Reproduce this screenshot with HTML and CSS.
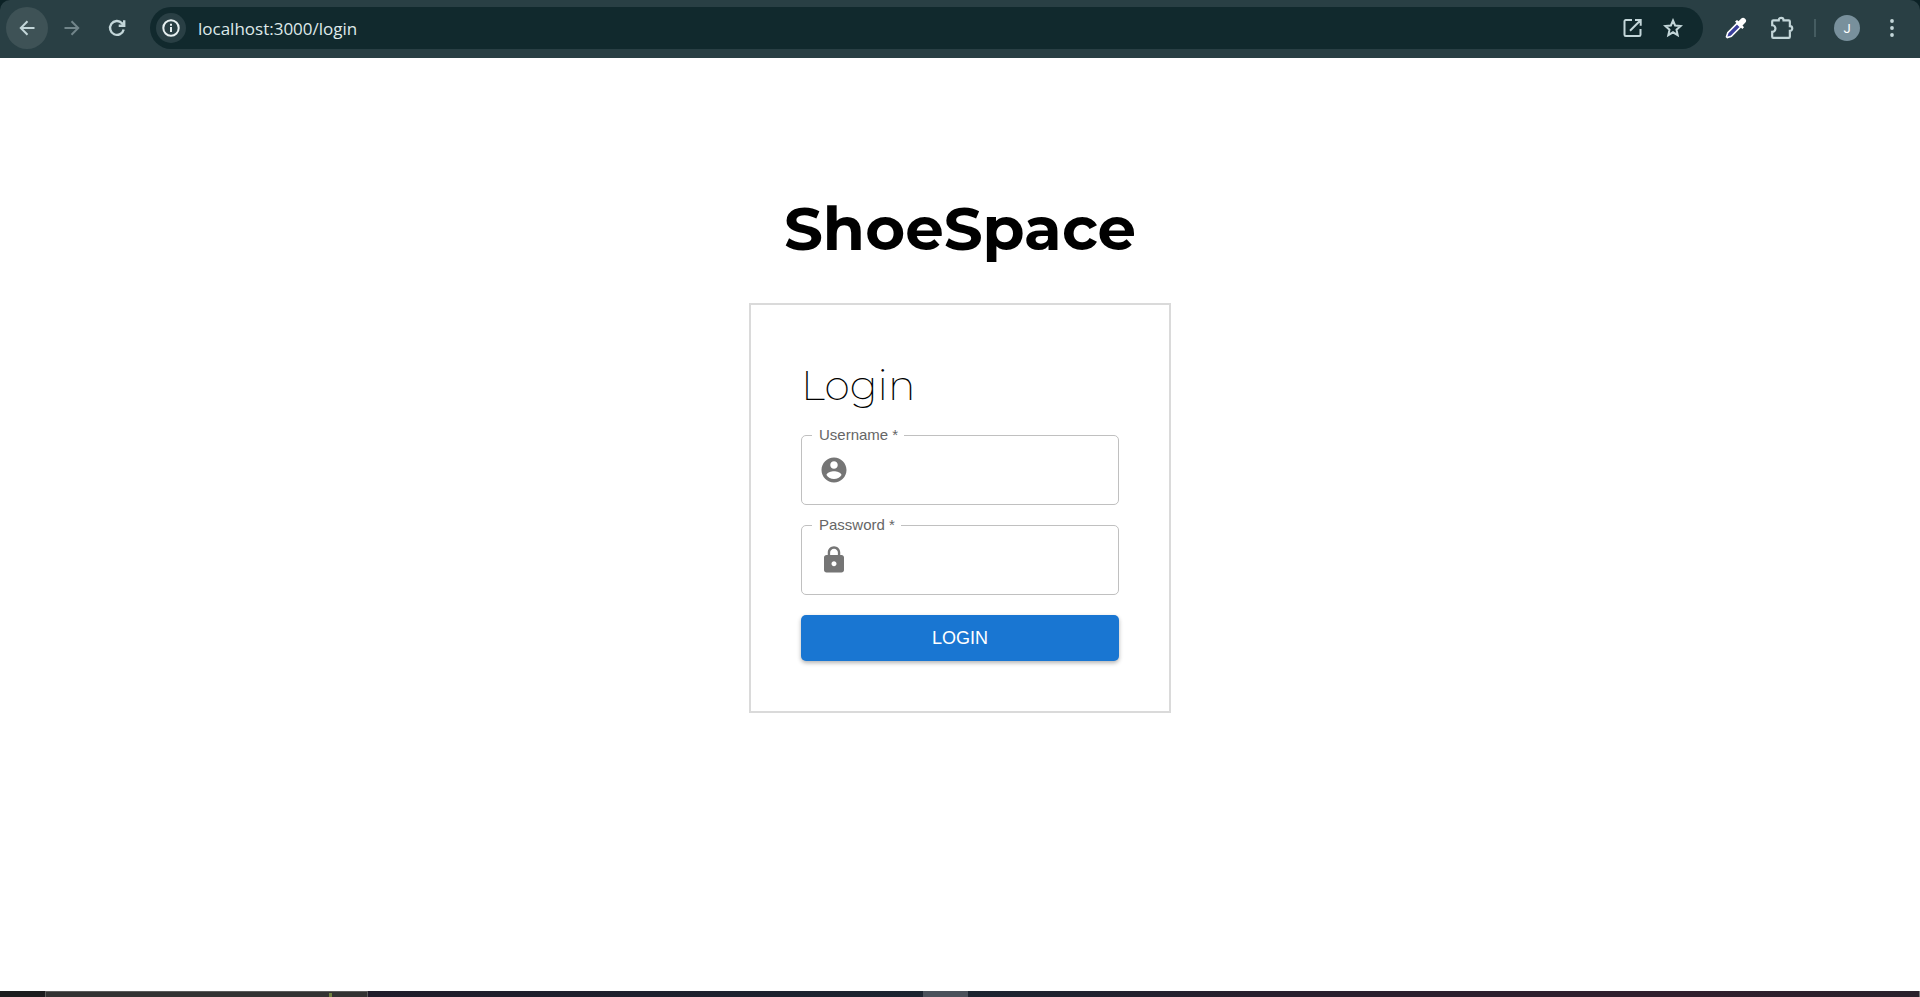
FILE: index.html
```html
<!DOCTYPE html>
<html lang="en">
<head>
<meta charset="utf-8">
<title>ShoeSpace</title>
<link rel="stylesheet" href="styles.css">
</head>
<body>
<div class="window">
  <div class="frame">
  <header class="toolbar">
    <nav class="nav">
      <button class="nav-btn nav-btn-active" type="button" aria-label="Back">
        <svg class="icon" viewBox="0 0 20 20"><path d="M17.500 10H4M10.500 3.300L3.800 10l6.700 6.700"/></svg>
      </button>
      <button class="nav-btn nav-btn-off" type="button" aria-label="Forward">
        <svg class="icon" viewBox="0 0 20 20"><path d="M2.500 10H16M9.500 3.300l6.700 6.700-6.700 6.700"/></svg>
      </button>
      <button class="nav-btn" type="button" aria-label="Reload">
        <svg class="icon icon-bold" viewBox="0 0 20 20"><path d="M16.700 11.500A6.900 6.900 0 1 1 15 5.200l2 2M17.200 2.300v5.500h-5.500"/></svg>
      </button>
    </nav>
    <div class="omnibox">
      <button class="info" type="button" aria-label="Site information">
        <svg class="icon" viewBox="0 0 20 20"><circle cx="10" cy="10" r="7.700"/><path d="M10 9v5M10 5.700v2"/></svg>
      </button>
      <input class="url" type="text" value="localhost:3000/login" aria-label="Address">
      <button class="tool" type="button" aria-label="Open in new window">
        <svg class="icon" viewBox="0 0 20 20"><path d="M9 2H2.800a1.300 1.300 0 0 0-1.300 1.300v13.400A1.300 1.300 0 0 0 2.800 18h13.400a1.300 1.300 0 0 0 1.300-1.300V11M12 2h5.700v5.700M17.500 2.200L7 12.700"/></svg>
      </button>
      <button class="tool" type="button" aria-label="Bookmark">
        <svg class="icon" viewBox="0 0 20 20"><path d="M10 2.500l2.100 5 5.600.5-4.200 3.700 1.200 5.500-4.700-2.900-4.700 2.900 1.200-5.500L2.300 8l5.600-.5z"/></svg>
      </button>
    </div>
    <div class="actions">
      <button class="tool" type="button" aria-label="Color picker">
        <svg class="dropper" viewBox="0 0 22 22"><path d="M12 6.500l3.500 3.500L6.300 19.200l-4 1.300-.8-.8 1.300-4z" fill="#3a3f9c" stroke="#fff" stroke-width="1.600"/><path d="M10 4.500l2-1.500 1.500 1.300L16 1.800a2.800 2.800 0 0 1 4.200 4L17.500 8.500l1.500 1.800-1.700 1.700z" fill="#fff"/></svg>
      </button>
      <button class="tool" type="button" aria-label="Extensions">
        <svg class="puzzle" viewBox="0 0 22 22"><path d="M3 4h5a2.200 2.200 0 0 1 4.400 0h4.800a1 1 0 0 1 1 1v4.300a2.200 2.200 0 0 1 0 4.400V19a1 1 0 0 1-1 1H3a1 1 0 0 1-1-1v-4.500a3 3 0 0 0 0-6V5a1 1 0 0 1 1-1z"/></svg>
      </button>
      <span class="divider"></span>
      <button class="avatar" type="button" aria-label="Profile">J</button>
      <button class="tool" type="button" aria-label="Menu">
        <svg class="dots" viewBox="0 0 20 20"><circle cx="10" cy="3" r="1.900"/><circle cx="10" cy="10" r="1.900"/><circle cx="10" cy="17" r="1.900"/></svg>
      </button>
    </div>
  </header>
  </div>
  <main class="page">
    <h1 class="brand">ShoeSpace</h1>
    <form class="card">
      <h2 class="title">Login</h2>
      <div class="field">
        <label class="label" for="username">Username *</label>
        <svg class="field-icon" viewBox="0 0 24 24"><path d="M12 2C6.480 2 2 6.480 2 12s4.480 10 10 10 10-4.480 10-10S17.520 2 12 2zm0 3c1.660 0 3 1.340 3 3s-1.340 3-3 3-3-1.340-3-3 1.340-3 3-3zm0 14.200c-2.500 0-4.710-1.280-6-3.220.030-1.990 4-3.080 6-3.080 1.990 0 5.970 1.090 6 3.080-1.290 1.940-3.500 3.220-6 3.220z"/></svg>
        <input class="input" id="username" type="text">
      </div>
      <div class="field">
        <label class="label" for="password">Password *</label>
        <svg class="field-icon" viewBox="0 0 24 24"><path d="M18 8h-1V6c0-2.760-2.240-5-5-5S7 3.240 7 6v2H6c-1.100 0-2 .9-2 2v10c0 1.100.9 2 2 2h12c1.100 0 2-.9 2-2V10c0-1.100-.9-2-2-2zm-6 9c-1.100 0-2-.9-2-2s.9-2 2-2 2 .9 2 2-.9 2-2 2zm3.100-9H8.900V6c0-1.710 1.390-3.100 3.100-3.100s3.100 1.390 3.100 3.100z"/></svg>
        <input class="input" id="password" type="password">
      </div>
      <button class="submit" type="button">LOGIN</button>
    </form>
  </main>
  <footer class="taskbar">
    <span class="task-start"></span>
    <span class="task-search"><i class="task-mark"></i></span>
    <span class="task-space"></span>
    <span class="task-app"></span>
    <span class="task-rest"></span>
  </footer>
</div>
</body>
</html>
```
FILE: styles.css
```css
* { box-sizing: border-box; }
body { margin: 0; background: #fff; font-family: "Liberation Sans", Arial, sans-serif; }
button { border: 0; padding: 0; background: none; color: inherit; font: inherit; }
.window { min-height: 100vh; display: flex; flex-direction: column; }

.frame { background: #0c2226; }
.toolbar { display: flex; align-items: center; height: 58px; padding: 0 14px 2px 6px; background: #293f44; border-radius: 10px 10px 0 0; color: #c3d6d9; }
.nav { display: flex; gap: 3px; }
.nav-btn { width: 42px; height: 42px; border-radius: 50%; display: grid; place-items: center; }
.nav-btn-active { background: #3e5256; }
.nav-btn-off { color: #71858a; }
.icon { width: 20px; height: 20px; display: block; fill: none; stroke: currentColor; stroke-width: 2; }
.icon-bold { stroke-width: 2.4; }
.omnibox { flex: 1; display: flex; align-items: center; gap: 12px; height: 42px; margin-left: 12px; padding: 0 16px 0 6px; border-radius: 21px; background: #11292d; }
.info { width: 30px; height: 30px; border-radius: 50%; display: grid; place-items: center; background: #293f44; color: #e6eff0; }
.url { flex: 1; min-width: 0; border: 0; outline: 0; padding: 0; background: none; color: #dfe9ea; font: 17px "Open Sans", "Noto Sans", sans-serif; }
.tool { width: 28px; height: 28px; display: grid; place-items: center; }
.actions { display: flex; align-items: center; gap: 18px; margin-left: 19px; }
.dropper { width: 22px; height: 22px; }
.puzzle { width: 24px; height: 24px; fill: none; stroke: currentColor; stroke-width: 2; }
.divider { width: 2px; height: 18px; background: #455c61; }
.avatar { width: 26px; height: 26px; border-radius: 50%; background: #78909c; color: #fff; font: 13px Roboto, sans-serif; }
.dots { width: 20px; height: 20px; fill: currentColor; }

.page { flex: 1; display: flex; flex-direction: column; align-items: center; padding-top: 130px; }
.brand { margin: 0 0 35px; font: 700 61px/80px Montserrat, Inter, sans-serif; color: #000; }
.card { width: 422px; max-width: 100%; display: flex; flex-direction: column; gap: 20px; padding: 50px; border: 2px solid #dadada; }
.title { margin: 0; font: 200 41px/60px Montserrat, Inter, sans-serif; color: #000; }
.field { position: relative; display: flex; align-items: center; gap: 10px; height: 70px; padding: 0 17px; border: 1px solid #c0c0c0; border-radius: 5px; }
.label { position: absolute; top: -10px; left: 10px; padding: 0 6px 0 7px; background: #fff; color: #666; font-size: 15px; line-height: 18px; }
.field-icon { width: 30px; height: 30px; fill: #757575; }
.input { flex: 1; min-width: 0; height: 40px; padding: 0; border: 0; outline: 0; background: none; font-size: 20px; }
.submit { height: 46px; border-radius: 5px; background: #1976d2; color: #fff; font-size: 18px; box-shadow: 0 2px 4px rgba(0, 0, 0, .3); }

.taskbar { display: flex; height: 6px; background: #202430; }
.task-start { width: 45px; background: #1c1c1e; }
.task-search { width: 323px; display: flex; justify-content: flex-end; padding-right: 35px; background: #333; border: 1px solid #5c5c5c; border-bottom: 0; }
.task-mark { width: 3px; height: 4px; margin-top: 1px; background: #6f8040; }
.task-space { flex: 555; background: linear-gradient(90deg, #201c2a, #1c2430); }
.task-app { width: 45px; background: #4b515b; }
.task-rest { flex: 952; border-right: 1px solid #777; background: linear-gradient(90deg, #1c2430, #281f2d 30%, #311f2d 75%, #2a212c); }
```
